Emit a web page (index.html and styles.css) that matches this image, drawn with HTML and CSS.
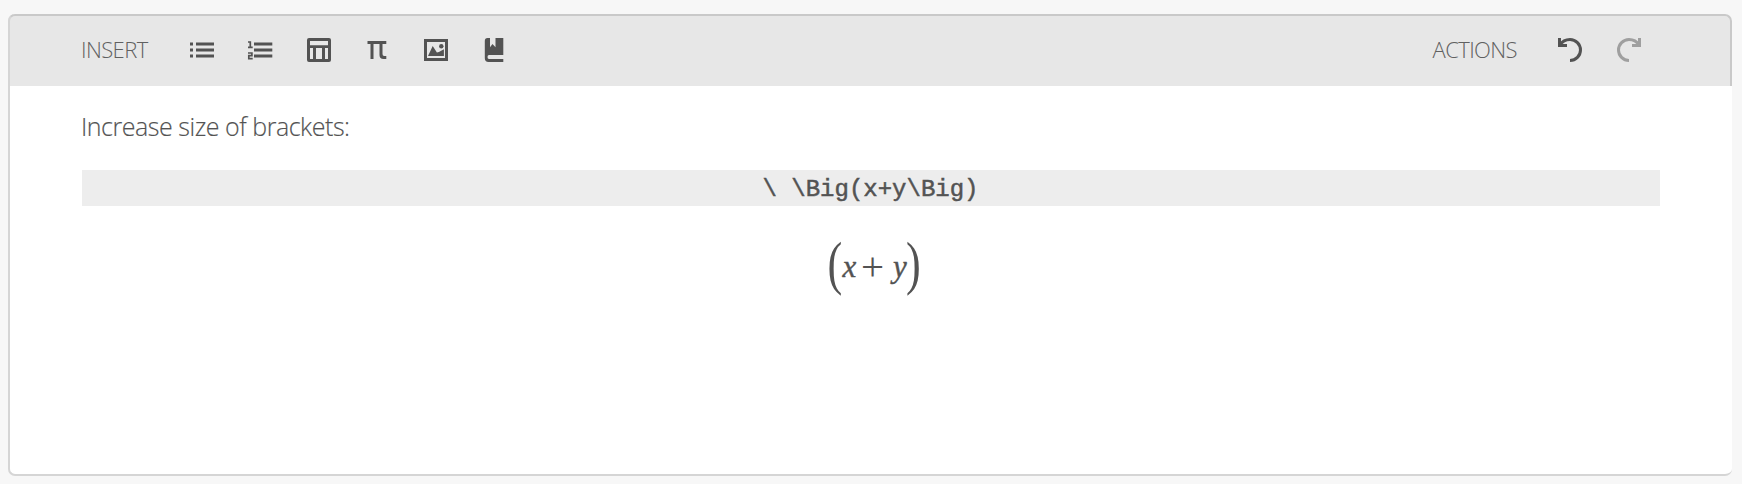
FILE: index.html
```html
<!DOCTYPE html>
<html lang="en">
<head>
<meta charset="utf-8">
<title>Editor</title>
<link rel="stylesheet" href="styles.css">
</head>
<body>
<main class="editor">
  <header class="toolbar">
    <span class="label insert-label">INSERT</span>
    <div class="tools">
      <svg class="icon" viewBox="0 0 24 24"><path d="M0 4.5h3v3H0zM6 4.5h18v3H6zM0 10.5h3v3H0zM6 10.5h18v3H6zM0 16.5h3v3H0zM6 16.5h18v3H6z"/></svg>
      <svg class="icon" viewBox="0 0 24 24"><path d="M6 4.5h18.3v3H6zM6 10.5h18.3v3H6zM6 16.5h18.3v3H6z"/><path class="line" stroke-width="1.7" d="M0 4h2.3v5.2M0 9.3h4.7M0 15h3.9v2.6H.8v3.1h3.9"/></svg>
      <svg class="icon" viewBox="0 0 24 24"><path fill-rule="evenodd" d="M2 0h20q2 0 2 2v20q0 2-2 2H2q-2 0-2-2V2Q0 0 2 0zM3 3v4.3h18V3zM3 10v11h3V10zM9 10v11h6V10zM18 10v11h3V10z"/></svg>
      <svg class="icon" viewBox="0 0 24 24"><path d="M2.5 3h18.8v3H17.5v10q0 2 1.7 2h2.1v3h-2.8q-4 0-4-4V6h-6v15h-3V6h-3z"/></svg>
      <svg class="icon" viewBox="0 0 24 24"><path fill-rule="evenodd" d="M0 1h24v22H0zM3 4v16h18V4z"/><path d="M4 18L8.7 8l4.2 6.5 2-.4 5-2.8V18z"/><circle cx="17.3" cy="8.2" r="2.2"/></svg>
      <svg class="icon" viewBox="0 0 24 24"><path fill-rule="evenodd" d="M5.5 0H8v9.3L10.5 6 13.500 9.300V0h7.800v17H7q-1.500 0-1.500 2t1.500 2h14.300v3H6.500q-3.700 0-3.700-4V3q0-3 2.700-3z"/></svg>
    </div>
    <div class="actions">
      <span class="label">ACTIONS</span>
      <svg class="icon" viewBox="0 0 24 24"><path class="line" stroke-width="3" d="M1.500 0v7.500H9M2 7C5 2 8.500 1.500 12 1.500a10.500 10.500 0 0 1 0 21"/></svg>
      <svg class="icon disabled" viewBox="0 0 24 24"><path class="line" stroke-width="3" d="M22.500 0v7.500H15M22 7C19 2 15.500 1.500 12 1.500a10.500 10.500 0 0 0 0 21"/></svg>
    </div>
  </header>
  <section class="content">
    <p class="text">Increase size of brackets:</p>
    <pre class="code">\ \Big(x+y\Big)</pre>
    <svg class="formula" viewBox="0 0 96 60">
      <text class="paren" transform="translate(.500 42.500) scale(.75 1)">(</text>
      <text class="var" x="15.500" y="36.500">x</text>
      <text class="plus" x="34" y="39.500">+</text>
      <text class="var" x="66" y="36.500">y</text>
      <text class="paren" transform="translate(79 42.500) scale(.75 1)">)</text>
    </svg>
  </section>
</main>
</body>
</html>
```
FILE: styles.css
```css
* { box-sizing: border-box; }
body {
  margin: 0;
  padding: 14px 10px 8px 8px;
  height: 484px;
  background: #f7f7f7;
  color: #535353;
  font-family: "Open Sans", sans-serif;
  font-weight: 300;
  overflow: hidden;
}
.editor {
  height: 462px;
  border-bottom: 2px solid #d5d5d5;
  border-left: 2px solid #d5d5d5;
  border-radius: 7px;
  background: #fff;
}
.toolbar {
  display: flex;
  align-items: center;
  height: 72px;
  margin-left: -2px;
  padding: 0 89px 0 71px;
  border: 2px solid #c9c9c9;
  border-left-color: #d5d5d5;
  border-bottom: 0;
  border-radius: 7px 7px 0 0;
  background: #e7e7e7;
}
.label {
  font-size: 22px;
  line-height: 30px;
  letter-spacing: -.6px;
  padding-bottom: 4px;
  color: #606060;
}
.insert-label { width: 109px; }
.tools {
  display: flex;
  gap: 34.4px;
  margin-top: -2px;
}
.actions {
  display: flex;
  align-items: center;
  margin-left: auto;
}
.actions .icon { margin: -2px 0 0 35px; }
.actions .label { margin-right: 6px; }
.icon {
  display: block;
  width: 24px;
  height: 24px;
  fill: #535353;
  overflow: visible;
}
.line { fill: none; stroke: #535353; }
.disabled .line { stroke: #9f9f9f; }
.content { padding: 22px 72px 0; }
.text {
  margin: 0 0 0 -1px;
  font-size: 25px;
  letter-spacing: -.47px;
  line-height: 36px;
  -webkit-text-stroke: .15px #535353;
}
.code {
  margin: 26px 0 0;
  padding-top: 2px;
  height: 36px;
  background: #ededed;
  font: 24px/36px "Liberation Mono", monospace;
  text-align: center;
  text-indent: -1px;
  -webkit-text-stroke: .5px #535353;
}
.formula {
  display: block;
  width: 96px;
  height: 60px;
  margin: 34px auto 0;
  position: relative;
  left: 4px;
  fill: #535353;
  overflow: visible;
}
.paren { font: 59px "Liberation Serif", serif; }
.var { font: italic 31px "Liberation Serif", serif; stroke: #535353; stroke-width: .4px; }
.plus { font: 41px "Liberation Serif", serif; }
```
